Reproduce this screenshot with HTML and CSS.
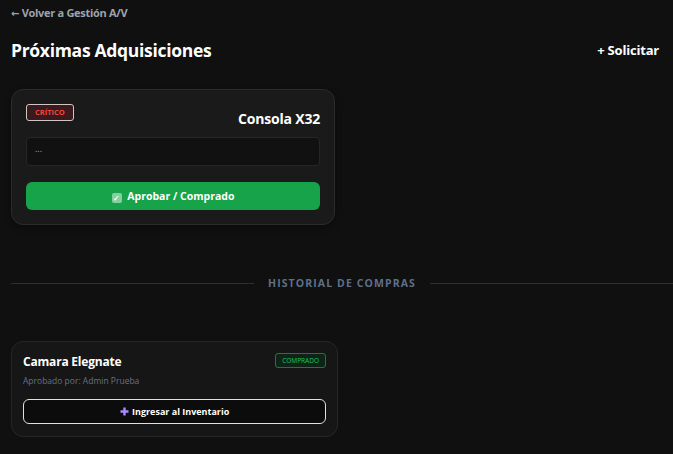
FILE: index.html
```html
<!DOCTYPE html>
<html lang="es">
<head>
  <meta charset="UTF-8">
  <meta name="viewport" content="width=device-width, initial-scale=1.0">
  <title>Próximas Adquisiciones</title>
  <link rel="stylesheet" href="styles.css">
</head>
<body>
  <a class="back" href="#"><span class="arrow">&larr;</span> Volver a Gestión A/V</a>

  <div class="header">
    <h1>Próximas Adquisiciones</h1>
    <button class="btn-solicitar">+ Solicitar</button>
  </div>

  <!-- solicitudes pendientes -->
  <div class="grid">
    <div class="card">
      <div class="card-top">
        <span class="badge critico">CRÍTICO</span>
        <h3>Consola X32</h3>
      </div>
      <div class="nota">...</div>
      <button class="btn-aprobar"><span class="check">&#10003;</span> Aprobar / Comprado</button>
    </div>
  </div>

  <div class="divider"><span>HISTORIAL DE COMPRAS</span></div>

  <!-- historial -->
  <div class="grid">
    <div class="card card-hist">
      <div class="hist-top">
        <h3>Camara Elegnate</h3>
        <span class="badge comprado">COMPRADO</span>
      </div>
      <p class="aprobado">Aprobado por: Admin Prueba</p>
      <button class="btn-ingresar">
        <svg class="plus" width="9" height="9" viewBox="0 0 9 9"><path d="M4.5 0.5v8M0.5 4.5h8" stroke="#a78bfa" stroke-width="2.4"/></svg>
        Ingresar al Inventario
      </button>
    </div>
  </div>
</body>
</html>
```

FILE: styles.css
```css
body {
  margin: 0;
  padding: 5px 11px;
  background-color: #101010;
  color: #fff;
  font-family: "Open Sans", "Noto Sans", sans-serif;
}
.back {
  display: block;
  width: max-content;
  height: 16px;
  color: #9ca3af;
  font-size: 11px;
  line-height: 16px;
  font-weight: 700;
  text-decoration: none;
  letter-spacing: -0.3px;
}
.arrow {
  font-family: "DejaVu Sans", sans-serif;
  font-size: 10px;
  line-height: 1;
}
.header {
  display: flex;
  justify-content: space-between;
  align-items: center;
  margin-top: 14px;
  height: 30px;
}
h1 {
  margin: 0;
  font-size: 17.5px;
  font-weight: 700;
  letter-spacing: -0.3px;
}
.btn-solicitar {
  background: transparent;
  color: #fff;
  border: none;
  padding: 6px 3px 6px 10px;
  font-family: inherit;
  font-size: 13px;
  font-weight: 700;
  letter-spacing: -0.2px;
  cursor: pointer;
}
.grid {
  display: grid;
  grid-template-columns: repeat(2, 325px);
}
.card {
  background-color: #1a1a1a;
  border: 1px solid #2b2b2b;
  border-radius: 12px;
  padding: 14px;
  margin-top: 24px;
  width: 294px;
  box-shadow: 0 2px 6px rgba(0, 0, 0, 0.4);
}
.card-top {
  display: flex;
  justify-content: space-between;
  align-items: flex-start;
}
.card-top h3 {
  margin: 5px 0 0;
  font-size: 14px;
  line-height: 19px;
  font-weight: 700;
  letter-spacing: -0.2px;
}
.badge {
  display: inline-block;
  font-weight: 700;
  border-radius: 3px;
  line-height: 9px;
}
.critico {
  font-size: 7.5px;
  color: #ef4444;
  background-color: #3a1a1c;
  border: 1px solid #d0c4c4;
  padding: 3px 8px;
}
.nota {
  box-sizing: border-box;
  margin-top: 9px;
  height: 29px;
  padding: 4px 8px;
  background-color: #111;
  border: 1px solid #262626;
  border-radius: 4px;
  color: #b0a0a8;
  font-size: 9px;
  line-height: 14px;
}
.btn-aprobar {
  display: block;
  width: 100%;
  margin-top: 16px;
  height: 28px;
  background-color: #16a34a;
  color: #fff;
  border: none;
  border-radius: 6px;
  font-family: inherit;
  font-size: 10.5px;
  font-weight: 700;
  cursor: pointer;
}
.check {
  display: inline-block;
  width: 10px;
  height: 10px;
  line-height: 10px;
  font-size: 8px;
  background-color: #86cfa0;
  color: #fff;
  border-radius: 2px;
  vertical-align: -1px;
  margin-right: 3px;
}
.divider {
  display: flex;
  align-items: center;
  margin: 51px -11px 0 0;
  height: 14px;
  color: #5f6f88;
  font-size: 10.5px;
  font-weight: 700;
  letter-spacing: 1.1px;
}
.divider::before,
.divider::after {
  content: "";
  flex: 1;
  height: 1px;
  background-color: #2e2e2e;
}
.divider span {
  padding: 0 14px;
}
.card-hist {
  background-color: #161616;
  margin-top: 51px;
  padding: 11px 11px 12px;
  width: 303px;
  border-color: #262626;
  box-shadow: none;
}
.hist-top {
  display: flex;
  justify-content: space-between;
  align-items: flex-start;
}
.hist-top h3 {
  margin: 0;
  font-size: 12px;
  line-height: 18px;
  font-weight: 700;
  letter-spacing: -0.2px;
}
.comprado {
  font-size: 6.5px;
  font-weight: 500;
  color: #22c55e;
  background-color: #0f2418;
  border: 1px solid #1b7a3a;
  padding: 2px 6px;
}
.aprobado {
  margin: 4px 0 0;
  color: #667085;
  font-size: 8.5px;
  line-height: 12px;
}
.btn-ingresar {
  display: block;
  width: 100%;
  margin-top: 12px;
  height: 25px;
  background-color: #0c0c0c;
  color: #fff;
  border: 1px solid #e0e0e0;
  border-radius: 6px;
  font-family: inherit;
  font-size: 9px;
  font-weight: 700;
  cursor: pointer;
}
.plus {
  vertical-align: -1px;
  margin-right: 1px;
}
```
